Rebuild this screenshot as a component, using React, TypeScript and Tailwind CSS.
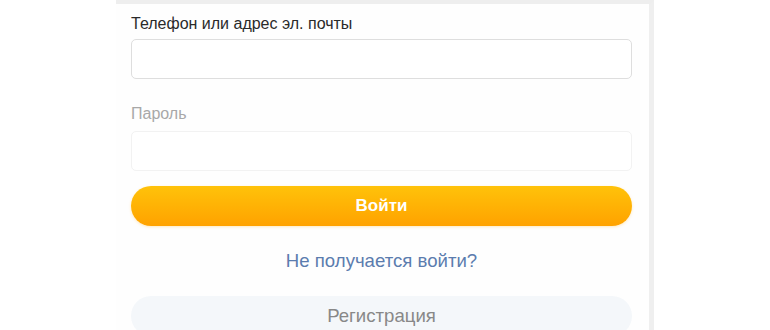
const App = () => {
  return (
    <div className="w-[770px] h-[330px] overflow-hidden bg-white font-['Liberation_Sans',Arial,sans-serif]">
      <div className="ml-[116px] w-[538px] h-[340px] bg-[#fefefe] border-t-4 border-t-[#eeeeee] border-r-[5px] border-r-[#efefef] pl-[15px] pr-[17px]">
        <div className="h-[35px] pt-[10px] text-[16px] leading-[19px] text-[#2a2a2a]">Телефон или адрес эл. почты</div>
        <input className="block w-full h-[40px] rounded-[5px] border border-[#dedede] bg-white px-3 outline-none" type="text" />
        <div className="h-[52px] pt-[25px] text-[16px] leading-[19px] text-[#a8a8a8]">Пароль</div>
        <input className="block w-full h-[40px] rounded-[5px] border border-[#f2f2f2] bg-white px-3 outline-none" type="password" />
        <button className="mt-[15px] w-full h-[40px] rounded-full bg-linear-to-b from-[#ffc20a] to-[#ffa200] text-white text-[17px] font-bold shadow-[0_1px_3px_rgba(255,170,0,0.25)]">
          Войти
        </button>
        <div className="h-[70px] flex items-center justify-center">
          <a className="text-[18.6px] text-[#5b7cae] cursor-pointer">Не получается войти?</a>
        </div>
        <button className="w-full h-[40px] rounded-full bg-[#f4f7fa] text-[18.6px] text-[#888]">Регистрация</button>
      </div>
    </div>
  );
};

export default App;
